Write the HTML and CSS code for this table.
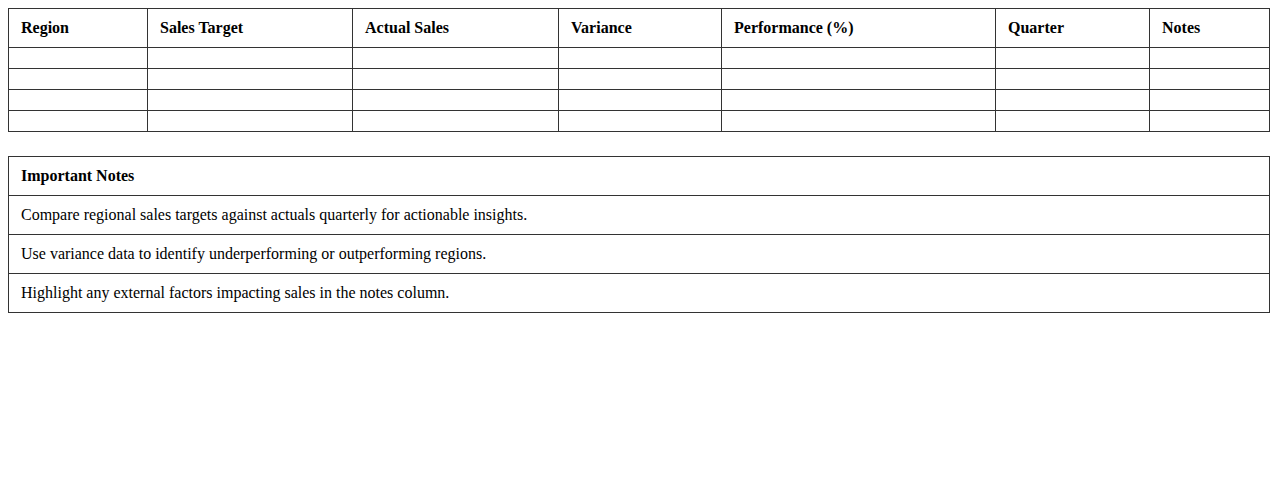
FILE: index.html
```html
<!DOCTYPE html>
<html>
<head>
<meta charset="utf-8">
<link rel="stylesheet" href="styles.css">
</head>
<body>
<table class="grid">
  <colgroup>
    <col class="c1"><col class="c2"><col class="c3"><col class="c4"><col class="c5"><col class="c6"><col class="c7">
  </colgroup>
  <thead>
    <tr><th>Region</th><th>Sales Target</th><th>Actual Sales</th><th>Variance</th><th>Performance (%)</th><th>Quarter</th><th>Notes</th></tr>
  </thead>
  <tbody>
    <tr><td></td><td></td><td></td><td></td><td></td><td></td><td></td></tr>
    <tr><td></td><td></td><td></td><td></td><td></td><td></td><td></td></tr>
    <tr><td></td><td></td><td></td><td></td><td></td><td></td><td></td></tr>
    <tr><td></td><td></td><td></td><td></td><td></td><td></td><td></td></tr>
  </tbody>
</table>
<table class="grid notes">
  <thead><tr><th>Important Notes</th></tr></thead>
  <tbody>
    <tr><td>Compare regional sales targets against actuals quarterly for actionable insights.</td></tr>
    <tr><td>Use variance data to identify underperforming or outperforming regions.</td></tr>
    <tr><td>Highlight any external factors impacting sales in the notes column.</td></tr>
  </tbody>
</table>
</body>
</html>
```
FILE: styles.css
```css
body {
  margin: 8px;
  font-family: "Liberation Serif", "Times New Roman", serif;
  font-size: 16px;
  color: #000;
  background: #fff;
}
.grid {
  width: 100%;
  border-collapse: collapse;
  table-layout: fixed;
  margin-bottom: 24px;
}
.grid th, .grid td {
  border: 1px solid #333;
  padding: 10px 12px;
  text-align: left;
  line-height: 18px;
}
.grid th { font-weight: bold; }
.c1 { width: 139px; }
.c2 { width: 205px; }
.c3 { width: 206px; }
.c4 { width: 163px; }
.c5 { width: 274px; }
.c6 { width: 154px; }
.c7 { width: 120px; }
```
